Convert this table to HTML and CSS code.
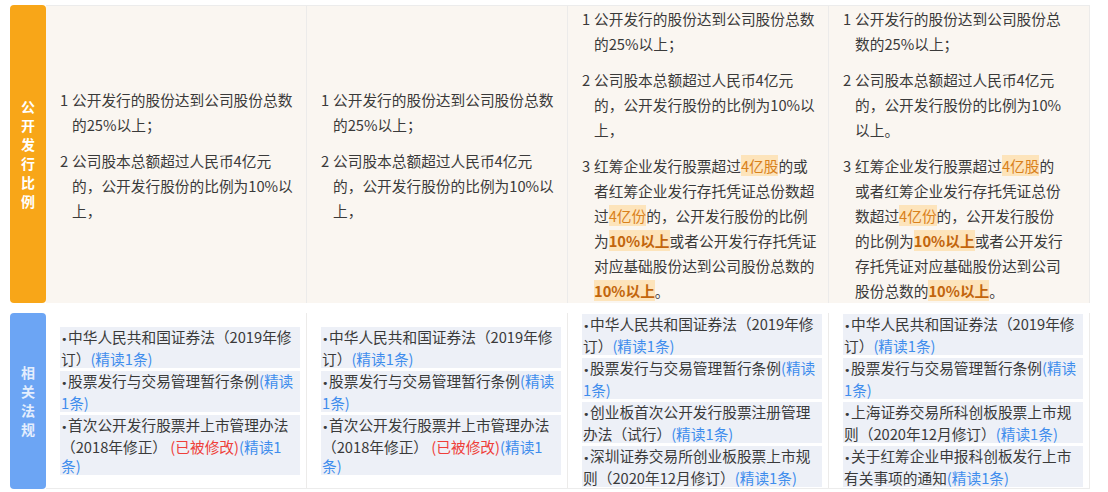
FILE: index.html
```html
<!DOCTYPE html>
<html lang="zh-CN">
<head>
  <meta charset="UTF-8" />
  <meta name="viewport" content="width=device-width, initial-scale=1.0" />
  <title>公开发行比例</title>
  <link rel="stylesheet" href="styles.css">
</head>
<body>
  <div class="table">
    <!-- 公开发行比例 -->
    <div class="label label-orange"><span>公开发行比例</span></div>

    <div class="cell cell-main">
      <div class="para"><span class="num">1</span><p>公开发行的股份达到公司股份总数的25%以上；</p></div>
      <div class="para"><span class="num">2</span><p>公司股本总额超过人民币4亿元的，公开发行股份的比例为10%以上，</p></div>
    </div>

    <div class="cell cell-main">
      <div class="para"><span class="num">1</span><p>公开发行的股份达到公司股份总数的25%以上；</p></div>
      <div class="para"><span class="num">2</span><p>公司股本总额超过人民币4亿元的，公开发行股份的比例为10%以上，</p></div>
    </div>

    <div class="cell cell-main">
      <div class="para"><span class="num">1</span><p>公开发行的股份达到公司股份总数的25%以上；</p></div>
      <div class="para"><span class="num">2</span><p>公司股本总额超过人民币4亿元的，公开发行股份的比例为10%以上，</p></div>
      <div class="para"><span class="num">3</span><p>红筹企业发行股票超过<span class="hl">4亿股</span>的或者红筹企业发行存托凭证总份数超过<span class="hl">4亿份</span>的，公开发行股份的比例为<span class="hl strong">10%以上</span>或者公开发行存托凭证对应基础股份达到公司股份总数的<span class="hl strong">10%以上</span>。</p></div>
    </div>

    <div class="cell cell-main narrow">
      <div class="para"><span class="num">1</span><p>公开发行的股份达到公司股份总数的25%以上；</p></div>
      <div class="para"><span class="num">2</span><p>公司股本总额超过人民币4亿元的，公开发行股份的比例为10%以上。</p></div>
      <div class="para"><span class="num">3</span><p>红筹企业发行股票超过<span class="hl">4亿股</span>的或者红筹企业发行存托凭证总份数超过<span class="hl">4亿份</span>的，公开发行股份的比例为<span class="hl strong">10%以上</span>或者公开发行存托凭证对应基础股份达到公司股份总数的<span class="hl strong">10%以上</span>。</p></div>
    </div>

    <!-- 相关法规 -->
    <div class="label label-blue"><span>相关法规</span></div>

    <div class="cell cell-law">
      <ul class="laws">
        <li>中华人民共和国证券法（2019年修订）<span class="read">(精读1条)</span></li>
        <li>股票发行与交易管理暂行条例<span class="read">(精读<wbr>1条)</span></li>
        <li>首次公开发行股票并上市管理办法（2018年修正） <span class="changed">(已被修改)</span><span class="read">(精读1<br>条)</span></li>
      </ul>
    </div>

    <div class="cell cell-law">
      <ul class="laws">
        <li>中华人民共和国证券法（2019年修订）<span class="read">(精读1条)</span></li>
        <li>股票发行与交易管理暂行条例<span class="read">(精读<wbr>1条)</span></li>
        <li>首次公开发行股票并上市管理办法（2018年修正） <span class="changed">(已被修改)</span><span class="read">(精读1<br>条)</span></li>
      </ul>
    </div>

    <div class="cell cell-law">
      <ul class="laws">
        <li>中华人民共和国证券法（2019年修订）<span class="read">(精读1条)</span></li>
        <li>股票发行与交易管理暂行条例<span class="read">(精读<wbr>1条)</span></li>
        <li>创业板首次公开发行股票注册管理办法（试行）<span class="read">(精读1条)</span></li>
        <li>深圳证券交易所创业板股票上市规则（2020年12月修订）<span class="read">(精读1条)</span></li>
      </ul>
    </div>

    <div class="cell cell-law">
      <ul class="laws">
        <li>中华人民共和国证券法（2019年修订）<span class="read">(精读1条)</span></li>
        <li>股票发行与交易管理暂行条例<span class="read">(精读<wbr>1条)</span></li>
        <li>上海证券交易所科创板股票上市规则（2020年12月修订）<span class="read">(精读1条)</span></li>
        <li>关于红筹企业申报科创板发行上市有关事项的通知<span class="read">(精读1条)</span></li>
      </ul>
    </div>
  </div>
</body>
</html>
```

FILE: styles.css
```css
body {
  margin: 0;
  padding: 5px 0 0 10px;
  background: #fff;
  color: #3a3a3a;
  font-family: 'Noto Sans CJK SC', 'Noto Sans', sans-serif;
  font-size: 14.7px;
  text-spacing-trim: space-all;
}

.table {
  display: grid;
  grid-template-columns: 36px repeat(4, 261px);
  row-gap: 10px;
}

.label {
  display: flex;
  align-items: center;
  justify-content: center;
  border-radius: 4px;
  font-size: 14px;
  font-weight: bold;
  text-align: center;
}

.label span {
  width: 15px;
  line-height: 19px;
}

.label-orange {
  background: #f8a618;
  color: #fff;
}

.label-blue {
  background: #6ca5f4;
  color: #e4eefd;
}

.cell {
  box-sizing: border-box;
  border-right: 1px solid #ecebea;
  display: flex;
  flex-direction: column;
  justify-content: center;
}

.cell-main {
  background: #faf6f1;
  border-top: 1px solid #ececec;
  padding: 0 8px 0 14px;
  line-height: 25px;
  gap: 11px;
}

.cell-main.narrow {
  padding-right: 24px;
}

.para {
  display: flex;
}

.para p {
  flex: 1;
  margin: 0;
}

.num {
  width: 12px;
  flex: none;
}

.hl {
  background: #fde4bb;
  color: #d9811c;
}

.hl.strong {
  color: #c2650c;
  font-weight: bold;
}

.cell-law {
  background: #fff;
  border-bottom: 1px solid #ececec;
  padding: 1px 6px 1px 14px;
  line-height: 19px;
}

.laws {
  list-style: none;
  margin: 0;
  padding: 0;
  display: flex;
  flex-direction: column;
  gap: 3px;
}

.laws li {
  background: #edf0f7;
  padding: 0 1px;
}

.laws li::before {
  content: "•";
  display: inline-block;
  width: 7px;
  font-family: 'DejaVu Sans', sans-serif;
  font-size: 11px;
}

.read {
  color: #3f8ded;
}

.changed {
  color: #ef3f3a;
}
```
